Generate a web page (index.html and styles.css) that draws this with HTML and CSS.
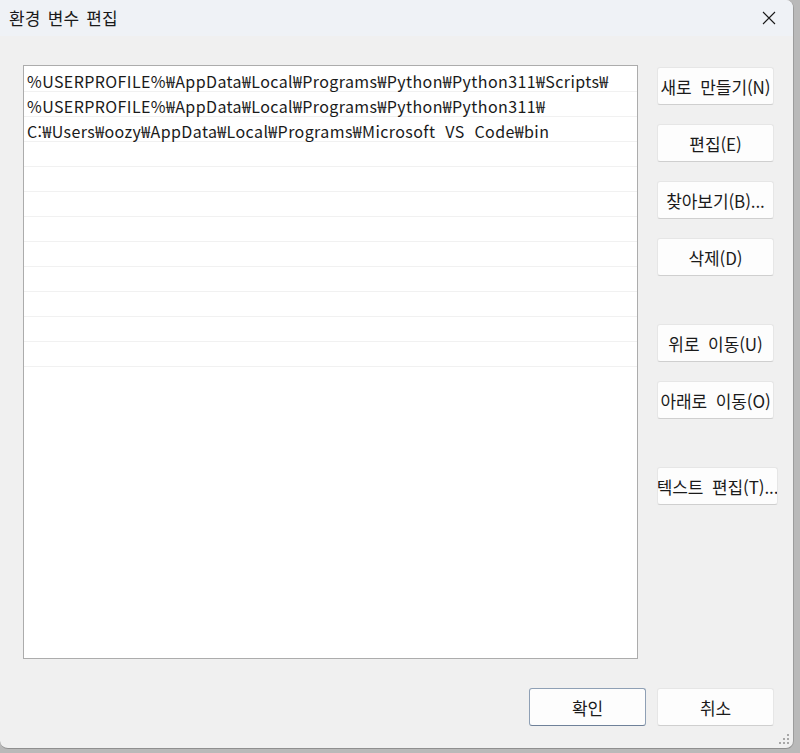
FILE: index.html
```html
<!DOCTYPE html>
<html lang="ko">
<head>
<meta charset="utf-8">
<title>환경 변수 편집</title>
<link rel="stylesheet" href="styles.css">
</head>
<body>
<div class="window">
  <div class="titlebar">
    <span class="title">환경 변수 편집</span>
    <span class="close"><svg width="14" height="14" viewBox="0 0 14 14"><path d="M1 1L13 13M13 1L1 13" stroke="#1a1a1a" stroke-width="1.1" fill="none"/></svg></span>
  </div>
  <div class="content">
    <div class="main">
      <div class="list">
        <div class="row">%USERPROFILE%₩AppData₩Local₩Programs₩Python₩Python311₩Scripts₩</div>
        <div class="row">%USERPROFILE%₩AppData₩Local₩Programs₩Python₩Python311₩</div>
        <div class="row">C:₩Users₩oozy₩AppData₩Local₩Programs₩Microsoft VS Code₩bin</div>
        <div class="row"></div>
        <div class="row"></div>
        <div class="row"></div>
        <div class="row"></div>
        <div class="row"></div>
        <div class="row"></div>
        <div class="row"></div>
        <div class="row"></div>
        <div class="row"></div>
      </div>
      <div class="side">
        <button class="btn">새로 만들기(N)</button>
        <button class="btn">편집(E)</button>
        <button class="btn">찾아보기(B)...</button>
        <button class="btn">삭제(D)</button>
        <button class="btn gap-lg">위로 이동(U)</button>
        <button class="btn">아래로 이동(O)</button>
        <button class="btn wide gap-lg">텍스트 편집(T)...</button>
      </div>
    </div>
    <div class="footer">
      <button class="btn primary">확인</button>
      <button class="btn">취소</button>
    </div>
    <div class="grip">
      <svg width="12" height="12" viewBox="0 0 12 12" fill="#a8a8a8"><rect x="9" y="1" width="2" height="2"/><rect x="5" y="5" width="2" height="2"/><rect x="9" y="5" width="2" height="2"/><rect x="1" y="9" width="2" height="2"/><rect x="5" y="9" width="2" height="2"/><rect x="9" y="9" width="2" height="2"/></svg>
    </div>
  </div>
</div>
</body>
</html>
```
FILE: styles.css
```css
* { box-sizing: border-box; }
html, body { margin: 0; padding: 0; }
body {
  width: 800px;
  height: 753px;
  background: #b9b9b9;
  font-family: "Noto Sans CJK KR", "Noto Sans", sans-serif;
  color: #1a1a1a;
  overflow: hidden;
}
.window {
  width: 794px;
  height: 749px;
  background: #f0f0f0;
  border-right: 1px solid #9c9c9c;
  border-bottom: 1px solid #8f8f8f;
  border-radius: 0 8px 8px 8px;
  overflow: hidden;
  display: flex;
  flex-direction: column;
  position: relative;
}
.titlebar {
  height: 36px;
  background: #eff2f6;
  display: flex;
  align-items: center;
  justify-content: space-between;
  padding: 0 17px 0 9px;
  flex: none;
}
.title {
  font-size: 17px;
  word-spacing: 2px;
  letter-spacing: 0.2px;
  margin-top: -1px;
}
.close { display: flex; }
.content {
  flex: 1;
  display: flex;
  flex-direction: column;
  padding: 29px 0 0 23px;
  position: relative;
}
.main {
  display: flex;
  align-items: flex-start;
}
.list {
  width: 615px;
  height: 594px;
  background: #fff;
  border: 1px solid #acacac;
  padding-top: 1px;
  flex: none;
}
.row {
  height: 25px;
  border-bottom: 1px solid #f1f1f1;
  font-size: 16px;
  line-height: 24px;
  padding-top: 2px;
  padding-left: 3px;
  white-space: nowrap;
  letter-spacing: 0.4px;
  word-spacing: 5px;
}
.side {
  display: flex;
  flex-direction: column;
  align-items: flex-start;
  margin-left: 19px;
  padding-top: 2px;
  gap: 19px;
}
.btn {
  width: 117px;
  height: 38px;
  background: #fdfdfd;
  border: 1px solid #e6e6e6;
  border-bottom-color: #cfcfcf;
  border-radius: 3px;
  font-family: "Noto Sans CJK KR", "Noto Sans", sans-serif;
  font-size: 17px;
  word-spacing: 4px;
  color: #1a1a1a;
  padding: 0;
  white-space: nowrap;
  overflow: hidden;
  display: flex;
  align-items: center;
  justify-content: center;
  letter-spacing: -0.1px;
}
.btn.wide { width: 121px; }
.btn.gap-lg { margin-top: 29px; }
.footer {
  display: flex;
  justify-content: flex-end;
  gap: 11px;
  margin-top: 29px;
  padding-right: 19px;
}
.btn.primary {
  border: 1px solid #8fa0b5;
  border-bottom-color: #6f8199;
}
.grip {
  position: absolute;
  right: 3px;
  bottom: 3px;
  display: flex;
}
```
